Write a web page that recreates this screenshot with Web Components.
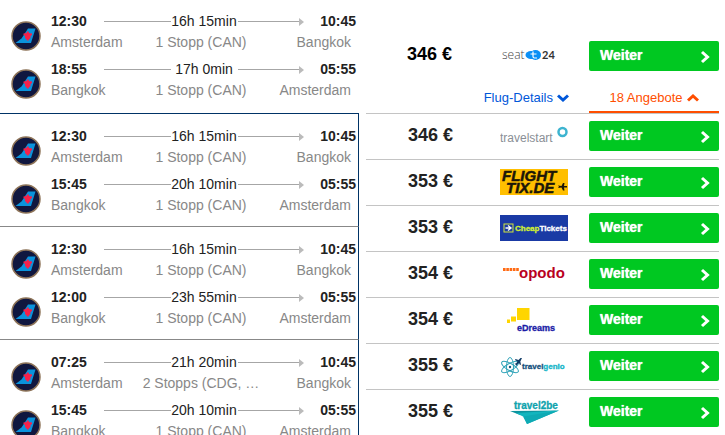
<!DOCTYPE html>
<html lang="de">
<head>
<meta charset="utf-8">
<title>Flüge Amsterdam – Bangkok</title>
<style>
  body { margin: 0; background: #fff; color: #222; font: 14px/21px "Liberation Sans", Arial, sans-serif; }
</style>
</head>
<body>
<flight-results></flight-results>

<template id="t-leg">
  <style>
    :host { display: grid; grid-template-columns: 30px 1fr; gap: 10px; height: 48px; padding: 0 2px 0 11px; }
    svg { width: 30px; height: 30px; margin-top: 10px; }
    .row { display: grid; align-items: center; white-space: nowrap; }
    .times { grid-template-columns: 53px 1fr 52px; }
    .track { display: grid; grid-template-columns: 1fr 67px 1fr; align-items: center; text-align: center; }
    .line { height: 1px; background: #a6a6a6; }
    .end { display: flex; align-items: center; }
    .end .line { flex: 1; }
    .end::after { content: ""; border: solid transparent; border-width: 4px 0 4px 5px; border-left-color: #bbb; }
    b:last-child { text-align: right; }
    .places { grid-template-columns: 1fr auto 1fr; padding-right: 5px; color: #888; }
    .places span:last-child { text-align: right; }
  </style>
  <svg viewBox="0 0 30 30" role="img" aria-label="China Southern">
    <circle cx="15" cy="15" r="14" fill="#10173f" stroke="#8d7358" stroke-width="1.5"/>
    <path d="M4.500 22 10.500 17.500 17 7.500H24.500L20 22Z" fill="#0a93dc"/>
    <path d="M16 10.500h1.500l.5 1.500 3 .5v1.500l-1.500 1v2l-1.500 1.500-.5 1h-1.500l-.5-1-1.500-1.500v-2l-1.500-1v-1.500l3-.5Z" fill="#f5214a"/>
  </svg>
  <div>
    <div class="row times">
      <b><slot name="dep"></slot></b>
      <div class="track"><i class="line"></i><span><slot name="duration"></slot></span><div class="end"><i class="line"></i></div></div>
      <b><slot name="arr"></slot></b>
    </div>
    <div class="row places">
      <span><slot name="from"></slot></span><span><slot name="stops"></slot></span><span><slot name="to"></slot></span>
    </div>
  </div>
</template>

<template id="t-trip">
  <style>
    :host { display: block; padding: 12px 0 4px; border-top: 1px solid #888; border-right: 1px solid #036; }
    :host([first]) { padding: 11px 0 6px; border-top: 0; border-right-color: transparent; }
    :host([open]) { border-top-color: #036; }
  </style>
  <slot></slot>
</template>

<template id="t-offer">
  <style>
    :host { display: grid; grid-template-columns: 1fr 68px 130px; column-gap: 21px; align-items: center; padding: 7px 0 8px; border-top: 1px solid #c4c4c4; }
    :host([first]) { border: 0; padding: 41px 0 0; color: #000; }
    .price { font-size: 18px; font-weight: bold; line-height: 28px; height: 30px; text-align: right; padding-right: 26px; white-space: nowrap; }
    :host([first]) .price { line-height: 26px; padding-right: 27px; }
    button { display: flex; justify-content: space-between; align-items: center; height: 30px; padding: 0 9px 0 11px; border: 0; border-radius: 2px; background: #00c821; color: #fff; font: bold 14px/28px "Liberation Sans", Arial, sans-serif; text-shadow: 0 0 1px #fff; cursor: pointer; }
    button span { padding-bottom: 2px; }
    button svg { width: 10px; height: 14px; margin-top: 2px; }
  </style>
  <div class="price"><slot></slot></div>
  <partner-logo></partner-logo>
  <button type="button"><span>Weiter</span><svg viewBox="0 0 10 14" aria-hidden="true"><path d="M2 2 7.500 7 2 12" fill="none" stroke="#fff" stroke-width="3"/></svg></button>
</template>

<template id="t-tabs">
  <style>
    :host { display: flex; justify-content: flex-end; gap: 20px; padding-top: 13px; font-size: 13px; line-height: 27px; }
    a { display: flex; align-items: center; justify-content: center; gap: 4px; color: #0057d9; text-decoration: none; white-space: nowrap; border-bottom: 2px solid transparent; }
    a.active { width: 130px; color: #ff4e00; border-color: #ff4e00; }
    svg { width: 12px; height: 8px; fill: none; stroke: currentColor; stroke-width: 3; }
  </style>
  <a href="#details">Flug-Details <svg viewBox="0 0 12 8" aria-hidden="true"><path d="M1 1.500 6 6 11 1.500"/></svg></a>
  <a href="#angebote" class="active">18 Angebote <svg viewBox="0 0 12 8" aria-hidden="true"><path d="M1 6.500 6 2 11 6.500"/></svg></a>
</template>

<template id="t-results">
  <style>
    :host { display: grid; grid-template-columns: 359fr 353fr; column-gap: 7px; padding-right: 6px; height: 100vh; overflow: hidden; box-sizing: border-box; align-items: start; }
  </style>
  <section id="trips" aria-label="Flüge"></section>
  <section id="offers" aria-label="Angebote"></section>
</template>

<script>
  const stamp = (host, id) => {
    const root = host.attachShadow({ mode: "open" });
    root.append(document.getElementById(id).content.cloneNode(true));
    return root;
  };

  const LOGOS = {
    seat24: `
      <text x="2" y="16" font-family="Open Sans" font-weight="300" font-size="12" fill="#444">seat</text>
      <ellipse cx="31" cy="12" rx="5.500" ry="4" fill="#0a8ff5"/><ellipse cx="35.500" cy="12" rx="5.500" ry="5" fill="#0a8ff5"/>
      <path d="M33 8.500v5q0 1.500 1.500 1.500H37M30.500 11h6" fill="none" stroke="#fff" stroke-width="1.200"/>
      <text x="42" y="16" font-family="Lato" font-weight="bold" font-size="11" fill="#333">24</text>`,
    travelstart: `
      <text x="0" y="19" font-family="Liberation Sans" font-size="12" fill="#8a8f96">travelstart</text>
      <circle cx="62.500" cy="9" r="4" fill="none" stroke="#3db4d0" stroke-width="2.500"/>`,
    flighttix: `
      <rect width="68" height="26" fill="#ffbf00"/>
      <g font-family="Liberation Sans" font-weight="bold" font-style="italic" fill="#1c1608" stroke="#1c1608" stroke-width=".5">
      <text x="2" y="12" font-size="15">FLIGHT</text><text x="6" y="24" font-size="15">TIX.DE</text></g>
      <path d="M58 16.500 61.500 17 63 14h1.500L64 17h3v1.500h-3l.5 3H63l-1.500-3L58 19l1-1.200Z" fill="#1c1608"/>`,
    cheaptickets: `
      <rect width="68" height="26" fill="#1a3aa5"/>
      <rect x="4" y="9" width="9" height="8" fill="none" stroke="#d2e63c"/>
      <path d="M5.500 13h6M8 10.500l3 2.500-3 2.500" fill="none" stroke="#fff" stroke-width="1.300"/>
      <text x="15" y="16" font-family="Liberation Sans" font-weight="bold" font-size="8" fill="#d2f032" stroke="#d2f032" stroke-width=".3">Cheap<tspan fill="#fff" stroke="#fff">Tickets</tspan></text>`,
    opodo: `
      <path d="M3 8.500H19.500" stroke="#ff6a13" stroke-width="3" stroke-dasharray="2.600 .7"/>
      <text x="19" y="17" font-family="Liberation Sans" font-weight="bold" font-size="15" fill="#b9001e">opodo</text>`,
    edreams: `
      <path d="M7 12.500h3v3.500H7ZM11 9.500h5V14.500h-5ZM17 1h12.500v12H17Z" fill="#ffd500"/>
      <text x="17" y="24" font-family="Liberation Sans" font-weight="bold" font-size="9" fill="#1a1aa6" stroke="#1a1aa6" stroke-width=".3">eDreams</text>`,
    travelgenio: `
      <g fill="none" stroke="#2fa3b8"><ellipse cx="10" cy="14" rx="3.500" ry="9.500"/><ellipse cx="10" cy="14" rx="3.500" ry="9.500" transform="rotate(60 10 14)"/><ellipse cx="10" cy="14" rx="3.500" ry="9.500" transform="rotate(120 10 14)"/></g>
      <circle cx="10" cy="14" r="1.200" fill="#16557a"/>
      <path d="M22 5 20.500 5 18.500 7 15.500 6 15 7l2.500 1.500L16 10.500h-1.500l1.500 1.500 1 1 .3-1.500L19 10l1 2 1-.5-.7-3Z" fill="#0f3b66"/>
      <text x="22" y="16" font-family="Liberation Sans" font-weight="bold" font-size="8" fill="#14507c" stroke="#14507c" stroke-width=".3">travel<tspan fill="#14b4c8" stroke="#14b4c8">genio</tspan></text>`,
    travel2be: `
      <text x="14" y="10" font-family="Liberation Sans" font-weight="bold" font-size="10" fill="#0fa3ad" stroke="#0fa3ad" stroke-width=".3">travel2be</text>
      <path d="M10 12 59 11.500 20 16Z" fill="#0c949e"/><path d="M16 14 59 11.500 27 25 24 18Z" fill="#12b5be"/><path d="M23 17.500 59 11.500 27 25Z" fill="#0eaab4"/>`
  };

  customElements.define("partner-logo", class extends HTMLElement {
    constructor() { super(); this.attachShadow({ mode: "open" }); }
    static observedAttributes = ["name"];
    attributeChangedCallback(_, __, name) {
      this.shadowRoot.innerHTML = `<style>:host { display: block; height: 26px; } svg { display: block; width: 68px; height: 26px; }</style>
        <svg viewBox="0 0 68 26" role="img" aria-label="${name}">${LOGOS[name]}</svg>`;
    }
  });
  customElements.define("flight-leg", class extends HTMLElement {
    constructor() { super(); stamp(this, "t-leg"); }
  });
  customElements.define("flight-trip", class extends HTMLElement {
    constructor() { super(); stamp(this, "t-trip"); }
  });
  customElements.define("offer-tabs", class extends HTMLElement {
    constructor() { super(); stamp(this, "t-tabs"); }
  });
  customElements.define("flight-offer", class extends HTMLElement {
    constructor() { super(); stamp(this, "t-offer"); }
    connectedCallback() { this.shadowRoot.querySelector("partner-logo").setAttribute("name", this.getAttribute("partner")); }
  });

  const A = "Amsterdam", B = "Bangkok", ONE = "1 Stopp (CAN)";
  const TRIPS = [
    [["12:30", "16h 15min", "10:45", A, ONE, B], ["18:55", "17h 0min", "05:55", B, ONE, A]],
    [["12:30", "16h 15min", "10:45", A, ONE, B], ["15:45", "20h 10min", "05:55", B, ONE, A]],
    [["12:30", "16h 15min", "10:45", A, ONE, B], ["12:00", "23h 55min", "05:55", B, ONE, A]],
    [["07:25", "21h 20min", "10:45", A, "2 Stopps (CDG, …", B], ["15:45", "20h 10min", "05:55", B, ONE, A]]
  ];
  const OFFERS = [[346, "seat24"], [346, "travelstart"], [353, "flighttix"], [353, "cheaptickets"],
    [354, "opodo"], [354, "edreams"], [355, "travelgenio"], [355, "travel2be"]];
  const SLOTS = ["dep", "duration", "arr", "from", "stops", "to"];

  customElements.define("flight-results", class extends HTMLElement {
    constructor() {
      super();
      const root = stamp(this, "t-results");
      root.getElementById("trips").innerHTML = TRIPS.map((legs, i) =>
        `<flight-trip ${["first", "open"][i] || ""}>${legs.map(leg =>
          `<flight-leg>${leg.map((v, k) => `<span slot="${SLOTS[k]}">${v}</span>`).join("")}</flight-leg>`).join("")}</flight-trip>`).join("");
      root.getElementById("offers").innerHTML = OFFERS.map(([price, name], i) =>
        `<flight-offer partner="${name}" ${i ? "" : "first"}>${price} €</flight-offer>${i ? "" : "<offer-tabs></offer-tabs>"}`).join("");
    }
  });
</script>
</body>
</html>
